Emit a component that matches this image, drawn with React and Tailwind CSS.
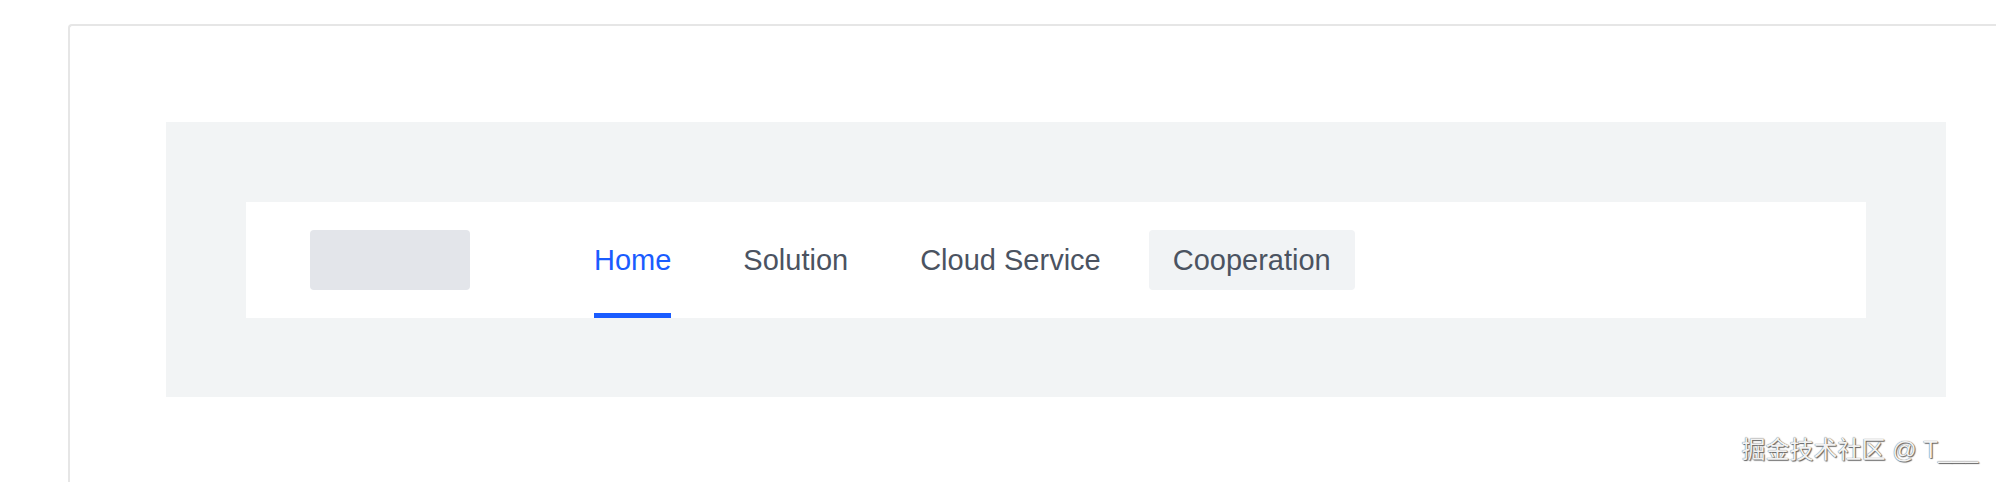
import React from 'react';

const navItems = ['Home', 'Solution', 'Cloud Service', 'Cooperation'];

function NavItem({ label, active, hovered }) {
  return (
    <div
      className={`relative flex items-center px-[24px] ${hovered ? 'self-center h-[60px] rounded-[4px] bg-[#f1f3f5]' : ''}`}
    >
      <span className={`pt-[2px] ${active ? 'text-[#1a5cff]' : 'text-[#4b5361]'}`}>{label}</span>
      {active && <div className="absolute bottom-0 left-[24px] right-[24px] h-[5px] bg-[#1a5cff]" />}
    </div>
  );
}

export default function App() {
  return (
    <div className="relative h-[482px] w-full overflow-hidden bg-white pl-[68px] pt-[24px] font-['Liberation_Sans',Arial,sans-serif]">
      {/* outer card, runs past the window edges */}
      <div className="h-[600px] w-[2000px] rounded-tl-[4px] border-l-2 border-t-2 border-[#e6e6e6] pl-[96px] pt-[96px]">
        <div className="w-[1780px] bg-[#f2f4f5] px-[80px] pb-[79px] pt-[80px]">
          <nav className="flex h-[116px] items-stretch bg-white pl-[64px] text-[29px]">
            <div className="h-[60px] w-[160px] self-center rounded-[4px] bg-[#e3e5ea]" />
            <div className="ml-[100px] flex gap-[24px]">
              {navItems.map((item, i) => (
                <NavItem key={item} label={item} active={i === 0} hovered={i === 3} />
              ))}
            </div>
          </nav>
        </div>
      </div>

      {/* watermark */}
      <div className="absolute right-[18px] top-[432px] font-['Liberation_Sans','Noto_Sans_CJK_SC',sans-serif] text-[24px] text-[#f2f2f2] [text-shadow:0_0_1px_#444,1px_1px_1px_#666]">
        掘金技术社区 @ T___
      </div>
    </div>
  );
}
